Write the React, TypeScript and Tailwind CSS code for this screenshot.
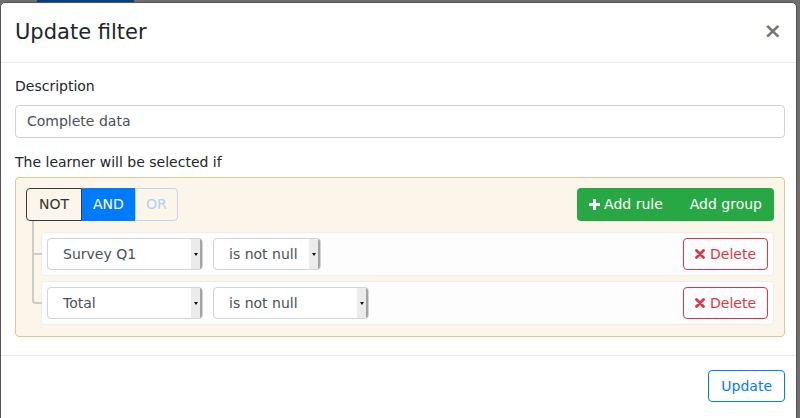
import React from "react";

const font = { fontFamily: '"DejaVu Sans", Verdana, sans-serif' };

function PlusIcon() {
  return (
    <svg width="11" height="11" viewBox="0 0 11 11" className="mr-[4px]">
      <rect x="4" y="0" width="3" height="11" fill="white" />
      <rect x="0" y="4" width="11" height="3" fill="white" />
    </svg>
  );
}

function RemoveIcon() {
  return (
    <svg width="10" height="10" viewBox="0 0 10 10" className="mr-[5px]">
      <path d="M1.5 1.5 L8.5 8.5 M8.5 1.5 L1.5 8.5" stroke="#dc3545" strokeWidth="2.8" strokeLinecap="round" />
    </svg>
  );
}

function FakeSelect({ label, width }: { label: string; width: string }) {
  return (
    <div className={`flex h-[32px] items-stretch overflow-hidden rounded-[4px] border border-[#ced4da] bg-white ${width}`}>
      <div className="flex flex-1 items-center pl-[15px] text-[14px] text-[#495057]">{label}</div>
      <div className="flex w-[11px] items-center justify-center border-r-2 border-[#a3a3a3] bg-[#ebebeb]">
        <div className="h-0 w-0 border-x-[2.5px] border-t-[3px] border-x-transparent border-t-[#111]" />
      </div>
    </div>
  );
}

function RuleRow({ field, fieldW, opW, first, last }: { field: string; fieldW: string; opW: string; first?: boolean; last?: boolean }) {
  return (
    <div className="relative flex h-[44px] items-center rounded-[4px] border border-[#eee] bg-[#fdfdfd] px-[5px]">
      {/* tree connectors */}
      <div
        className={`absolute left-[-10px] w-[10px] border-b-2 border-l-2 border-[#ccc] ${first ? "top-[-12px]" : "top-[-7px]"} ${last ? "rounded-bl-[4px]" : ""}`}
        style={{ bottom: "calc(50% - 1px)" }}
      />
      {!last && <div className="absolute bottom-[-7px] left-[-10px] top-1/2 border-l-2 border-[#ccc]" />}
      <FakeSelect label={field} width={fieldW} />
      <div className="ml-[10px]">
        <FakeSelect label="is not null" width={opW} />
      </div>
      <button className="ml-auto flex h-[32px] items-center rounded-[4px] border border-[#dc3545] px-[11px] text-[14px] text-[#dc3545]">
        <RemoveIcon />
        Delete
      </button>
    </div>
  );
}

export default function App() {
  return (
    <div className="relative h-[418px] w-[800px] overflow-hidden bg-[#6e6e6e] pt-[2px] pr-[3px]" style={font}>
      <div className="absolute left-[37px] top-0 h-[2px] w-[97px] bg-[#0b3f7c]" />
      <div className="h-[440px] rounded-[5px] border border-[#555] bg-white text-[#212529]">
        {/* Header */}
        <div className="flex h-[60px] items-center justify-between border-b border-[#e9ecef] pl-[14px] pr-[14px]">
          <h5 className="pb-[1px] text-[21px] leading-[30px]">Update filter</h5>
          <span className="pb-[3px] text-[22px] font-bold leading-none text-[#777]">×</span>
        </div>

        {/* Body */}
        <div className="pb-[18px] pl-[14px] pr-[11px] pt-[13px] text-[14px] leading-[21px]">
          <div className="mb-[8px]">Description</div>
          <div className="flex h-[33px] items-center rounded-[4px] border border-[#ced4da] px-[11px] text-[#495057]">
            Complete data
          </div>
          <div className="mb-[4px] mt-[14px]">The learner will be selected if</div>

          <div className="rounded-[4px] border border-[#dcc896] bg-[#fcf5e9] px-[10px] pb-[11px] pt-[10px]">
            <div className="flex items-center justify-between">
              <div className="flex h-[33px]">
                <button className="rounded-l-[4px] border border-[#343a40] px-[12px] text-[#333]">NOT</button>
                <button className="border border-[#007bff] bg-[#007bff] px-[10px] text-white">AND</button>
                <button className="rounded-r-[4px] border border-[#b9d8f8] px-[10px] text-[#b0d1f3]">OR</button>
              </div>
              <div className="flex h-[33px] rounded-[4px] bg-[#28a745] text-white">
                <button className="flex items-center pl-[12px] pr-[15px]">
                  <PlusIcon />
                  Add rule
                </button>
                <button className="px-[12px]">Add group</button>
              </div>
            </div>
            <div className="mt-[11px] flex flex-col gap-[5px] pl-[15px]">
              <RuleRow field="Survey Q1" fieldW="w-[156px]" opW="w-[108px]" first />
              <RuleRow field="Total" fieldW="w-[156px]" opW="w-[156px]" last />
            </div>
          </div>
        </div>

        {/* Footer */}
        <div className="flex justify-end border-t border-[#e9ecef] pl-[14px] pr-[11px] pt-[14px]">
          <button className="h-[32px] rounded-[4px] border border-[#007bff] px-[12px] text-[14px] text-[#007bff]">Update</button>
        </div>
      </div>
    </div>
  );
}
